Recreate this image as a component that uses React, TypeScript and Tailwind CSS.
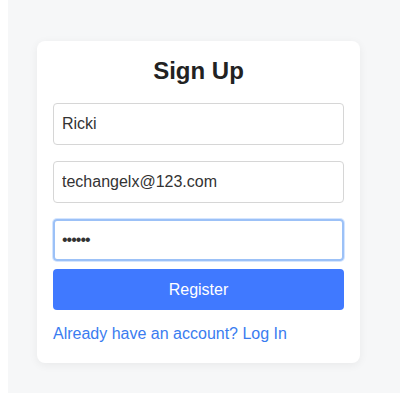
import React from "react";

export default function App() {
  const font = { fontFamily: '"Liberation Sans", Arial, sans-serif' };
  return (
    <div className="w-[400px] h-[400px] bg-white" style={font}>
      <div className="ml-[8px] h-[393px] bg-[#f6f7f8] pt-[41px] pl-[29px]">
        <div className="w-[323px] h-[322px] bg-white rounded-[8px] shadow-[0_2px_10px_rgba(0,0,0,0.06)] px-[16px] pt-[16px]">
          <h2 className="text-center text-[24px] leading-[28px] font-bold text-[#222] mb-[18px]">Sign Up</h2>
          <div className="flex flex-col gap-[16px]">
            <input
              readOnly
              value="Ricki"
              className="h-[42px] w-full border border-[#d6d6d6] rounded-[4px] px-[8px] text-[16px] text-[#333] outline-none"
              style={font}
            />
            <input
              readOnly
              value="techangelx@123.com"
              className="h-[42px] w-full border border-[#d6d6d6] rounded-[4px] px-[8px] text-[16px] text-[#333] outline-none"
              style={font}
            />
            <input
              readOnly
              type="password"
              value="123456"
              className="h-[42px] w-full border-2 border-[#9cc1f7] shadow-[0_0_0_1px_#d4e5ff] rounded-[4px] px-[7px] text-[16px] tracking-[-1px] text-[#333] outline-none"
              style={font}
            />
          </div>
          <button
            className="mt-[8px] h-[41px] w-full bg-[#4079ff] text-white text-[16px] rounded-[4px]"
            style={font}
          >
            Register
          </button>
          <p className="mt-[15px] text-[16px] leading-[18px] text-[#3a7cf0]">Already have an account? Log In</p>
        </div>
      </div>
    </div>
  );
}
